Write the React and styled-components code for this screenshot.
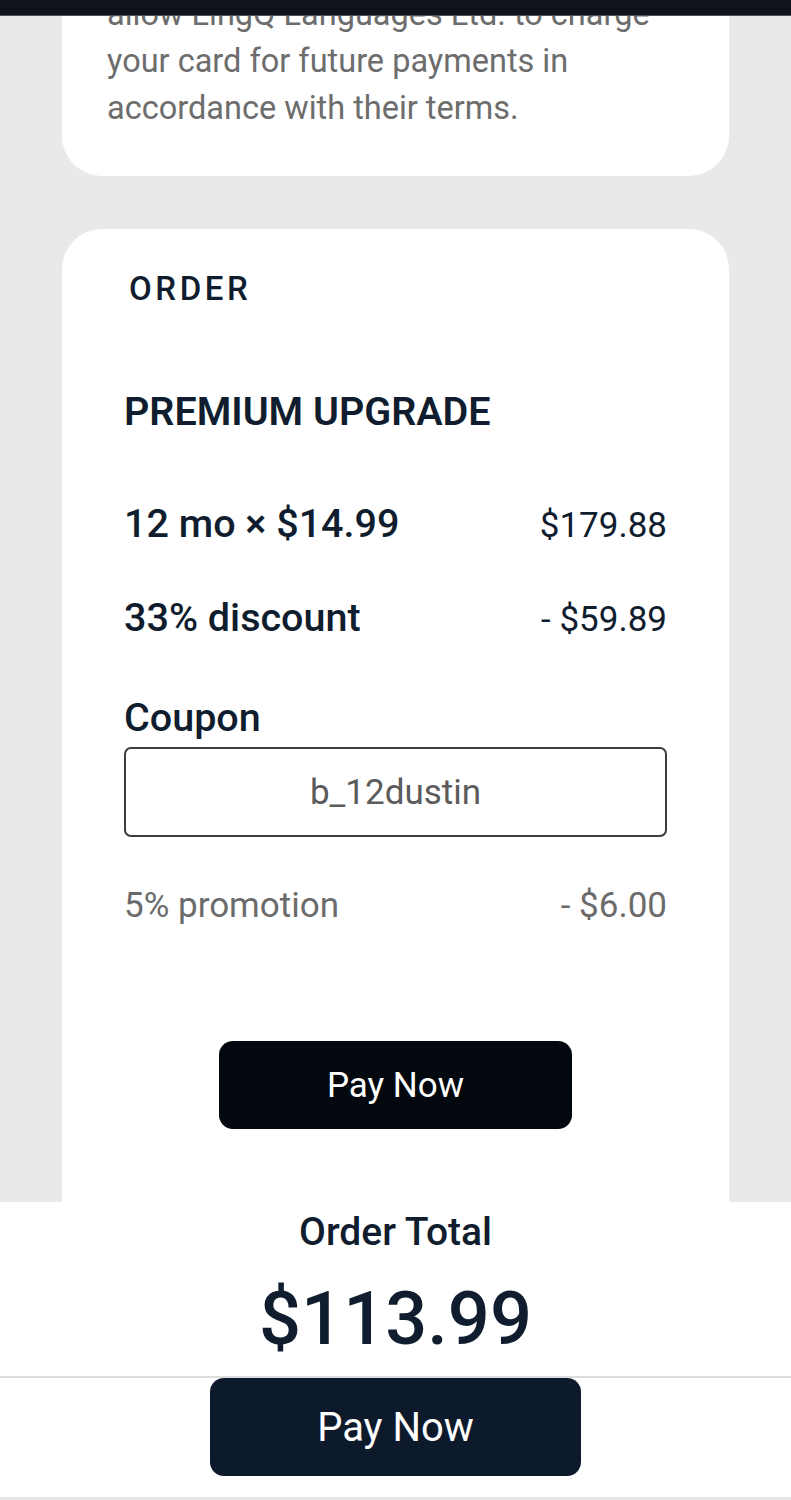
import React from 'react';
import styled, { createGlobalStyle } from 'styled-components';

const GlobalStyle = createGlobalStyle`
  html, body {
    margin: 0;
    padding: 0;
    background: #e8e9ea;
    font-family: Roboto, "Liberation Sans", Arial, sans-serif;
    -webkit-font-smoothing: antialiased;
  }
  * {
    box-sizing: border-box;
  }
`;

const ORDER_LINES = [
  { id: 'months', label: '12 mo × $14.99', amount: '$179.88', gap: 65 },
  { id: 'discount', label: '33% discount', amount: '- $59.89', gap: 47 },
];

const App = () => {
  return (
    <>
      <GlobalStyle />
      <TopBar />
      <Page>
        <TermsCard>
          <TermsText>
            allow LingQ Languages Ltd. to charge your card for future payments
            in accordance with their terms.
          </TermsText>
        </TermsCard>

        <OrderCard>
          <SectionLabel>ORDER</SectionLabel>
          <PlanTitle>PREMIUM UPGRADE</PlanTitle>
          {ORDER_LINES.map(line => (
            <LineRow key={line.id} $gap={line.gap}>
              <LineLabel>{line.label}</LineLabel>
              <LineAmount>{line.amount}</LineAmount>
            </LineRow>
          ))}
          <CouponLabel>Coupon</CouponLabel>
          <CouponInput defaultValue="b_12dustin" />
          <PromoRow>
            <span>5% promotion</span>
            <span>- $6.00</span>
          </PromoRow>
          <ButtonWrap>
            <PayButton>Pay Now</PayButton>
          </ButtonWrap>
        </OrderCard>
      </Page>

      <Footer>
        <TotalBlock>
          <TotalLabel>Order Total</TotalLabel>
          <TotalAmount>$113.99</TotalAmount>
        </TotalBlock>
        <FooterActions>
          <FooterPayButton>Pay Now</FooterPayButton>
        </FooterActions>
      </Footer>
    </>
  );
};

export default App;

const TopBar = styled.div`
  position: fixed;
  top: 0;
  left: 0;
  right: 0;
  height: 16px;
  background: #0f141b;
  border-bottom: 1px solid #4d5258;
  z-index: 10;
`;

const Page = styled.div`
  display: flex;
  flex-direction: column;
  gap: 53px;
  padding: 0 62px 400px;
`;

const TermsCard = styled.div`
  margin-top: -9px;
  padding: 0 45px 44px;
  background: #fff;
  border-radius: 0 0 40px 40px;
`;

const TermsText = styled.p`
  margin: 0;
  font-size: 32.5px;
  line-height: 47px;
  color: #6d6d6d;
`;

const OrderCard = styled.div`
  display: flex;
  flex-direction: column;
  padding: 40px 62px 120px;
  background: #fff;
  border-radius: 40px;
  color: #0f1d2e;
`;

const SectionLabel = styled.div`
  padding-left: 5px;
  font-size: 33px;
  font-weight: 500;
  line-height: 1.2;
  letter-spacing: 3.6px;
`;

const PlanTitle = styled.div`
  margin-top: 79px;
  font-size: 39.5px;
  font-weight: 600;
  line-height: 1.2;
`;

const LineRow = styled.div`
  display: flex;
  justify-content: space-between;
  align-items: baseline;
  margin-top: ${props => props.$gap}px;
`;

const LineLabel = styled.span`
  font-size: 39.5px;
  font-weight: 500;
  line-height: 1.2;
`;

const LineAmount = styled.span`
  font-size: 35px;
  font-weight: 400;
  line-height: 1.2;
`;

const CouponLabel = styled.div`
  margin-top: 52px;
  font-size: 39.5px;
  font-weight: 500;
  line-height: 1.2;
`;

const CouponInput = styled.input`
  margin-top: 6px;
  width: 100%;
  height: 90px;
  border: 2px solid #3a3d42;
  border-radius: 7px;
  background: #fff;
  text-align: center;
  font-family: inherit;
  font-size: 35px;
  color: #5b5b5b;
  outline: none;
`;

const PromoRow = styled.div`
  display: flex;
  justify-content: space-between;
  margin-top: 48px;
  font-size: 35px;
  line-height: 1.2;
  color: #6b6b6b;
`;

const ButtonWrap = styled.div`
  display: flex;
  justify-content: center;
  margin-top: 114px;
`;

const PayButton = styled.button`
  width: 353px;
  height: 88px;
  border: none;
  border-radius: 14px;
  background: #03080e;
  color: #fff;
  font-family: inherit;
  font-size: 35px;
  cursor: pointer;
`;

const Footer = styled.div`
  position: fixed;
  left: 0;
  right: 0;
  bottom: 0;
  height: 298px;
  display: flex;
  flex-direction: column;
  background: #fff;
  color: #0f1d2e;
  z-index: 5;
`;

const TotalBlock = styled.div`
  display: flex;
  flex-direction: column;
  align-items: center;
  gap: 22px;
  padding: 7px 0 17px;
  border-bottom: 2px solid #dcdcdc;
`;

const TotalLabel = styled.div`
  font-size: 39px;
  font-weight: 500;
  line-height: 1.2;
`;

const TotalAmount = styled.div`
  font-size: 74px;
  font-weight: 500;
  line-height: 1.1;
`;

const FooterActions = styled.div`
  flex: 1;
  display: flex;
  justify-content: center;
  align-items: flex-start;
  border-bottom: 3px solid #e6e6e6;
`;

const FooterPayButton = styled.button`
  width: 371px;
  height: 98px;
  border: none;
  border-radius: 14px;
  background: #0c1a2c;
  color: #fff;
  font-family: inherit;
  font-size: 40px;
  cursor: pointer;
`;
